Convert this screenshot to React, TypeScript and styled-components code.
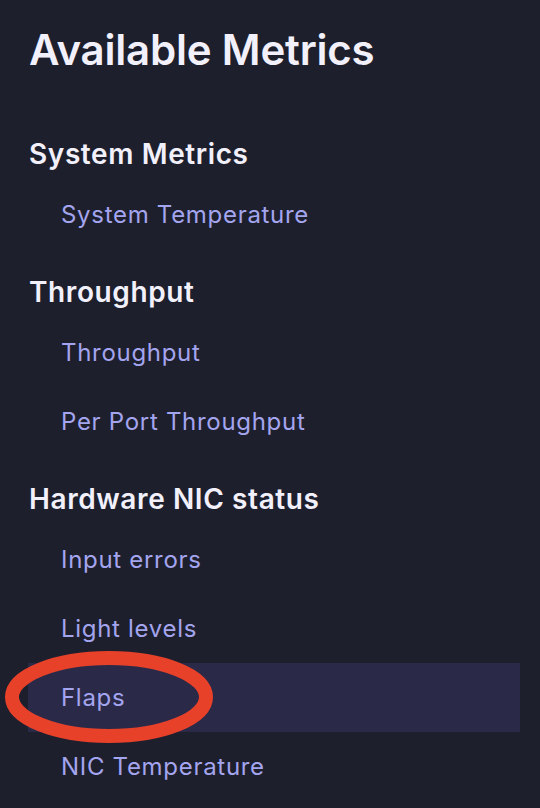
import React from 'react';
import styled, { createGlobalStyle } from 'styled-components';

const GlobalStyle = createGlobalStyle`
  html, body {
    margin: 0;
    padding: 0;
    background: #1e1f2d;
  }
  body {
    font-family: Inter, "Noto Sans", sans-serif;
  }
`;

type Group = { title: string; items: string[] };

const groups: Group[] = [
  { title: 'System Metrics', items: ['System Temperature'] },
  { title: 'Throughput', items: ['Throughput', 'Per Port Throughput'] },
  {
    title: 'Hardware NIC status',
    items: ['Input errors', 'Light levels', 'Flaps', 'NIC Temperature'],
  },
];

const ACTIVE = 'Flaps';

const App = () => {
  return (
    <>
      <GlobalStyle />
      <Panel>
        <Title>Available Metrics</Title>
        {groups.map((g) => (
          <Section key={g.title}>
            <Heading>{g.title}</Heading>
            <List>
              {g.items.map((item) => (
                <Item key={item} active={item === ACTIVE}>
                  {item}
                  {item === ACTIVE && (
                    <Circle viewBox="0 0 210 92" aria-hidden>
                      <ellipse
                        cx="105"
                        cy="46"
                        rx="97"
                        ry="39"
                        fill="none"
                        stroke="#e8412a"
                        strokeWidth="14"
                      />
                    </Circle>
                  )}
                </Item>
              ))}
            </List>
          </Section>
        ))}
      </Panel>
    </>
  );
};

export default App;

const Panel = styled.div`
  width: 540px;
  height: 808px;
  box-sizing: border-box;
  padding: 26px 20px 0 28px;
  background: #1e1f2d;
  overflow: hidden;
`;

const Title = styled.h1`
  margin: 0 0 62px 1px;
  font-size: 42px;
  line-height: 48px;
  font-weight: 600;
  color: #f1f0fb;
  letter-spacing: -0.2px;
`;

const Section = styled.section`
  margin-bottom: 25px;
`;

const Heading = styled.h2`
  margin: 0 0 8px 1px;
  font-size: 28px;
  line-height: 36px;
  font-weight: 600;
  color: #f1f0fb;
  letter-spacing: 0.6px;
`;

const List = styled.ul`
  list-style: none;
  margin: 0;
  padding: 0;
`;

const Item = styled.li<{ active: boolean }>`
  position: relative;
  display: flex;
  align-items: center;
  height: 69px;
  padding-left: 33px;
  font-size: 24px;
  color: #a4a5ef;
  letter-spacing: 0.7px;
  background: ${({ active }) => (active ? '#2a2a48' : 'transparent')};
`;

const Circle = styled.svg`
  position: absolute;
  left: -24px;
  top: -12px;
  width: 210px;
  height: 92px;
  overflow: visible;
`;
